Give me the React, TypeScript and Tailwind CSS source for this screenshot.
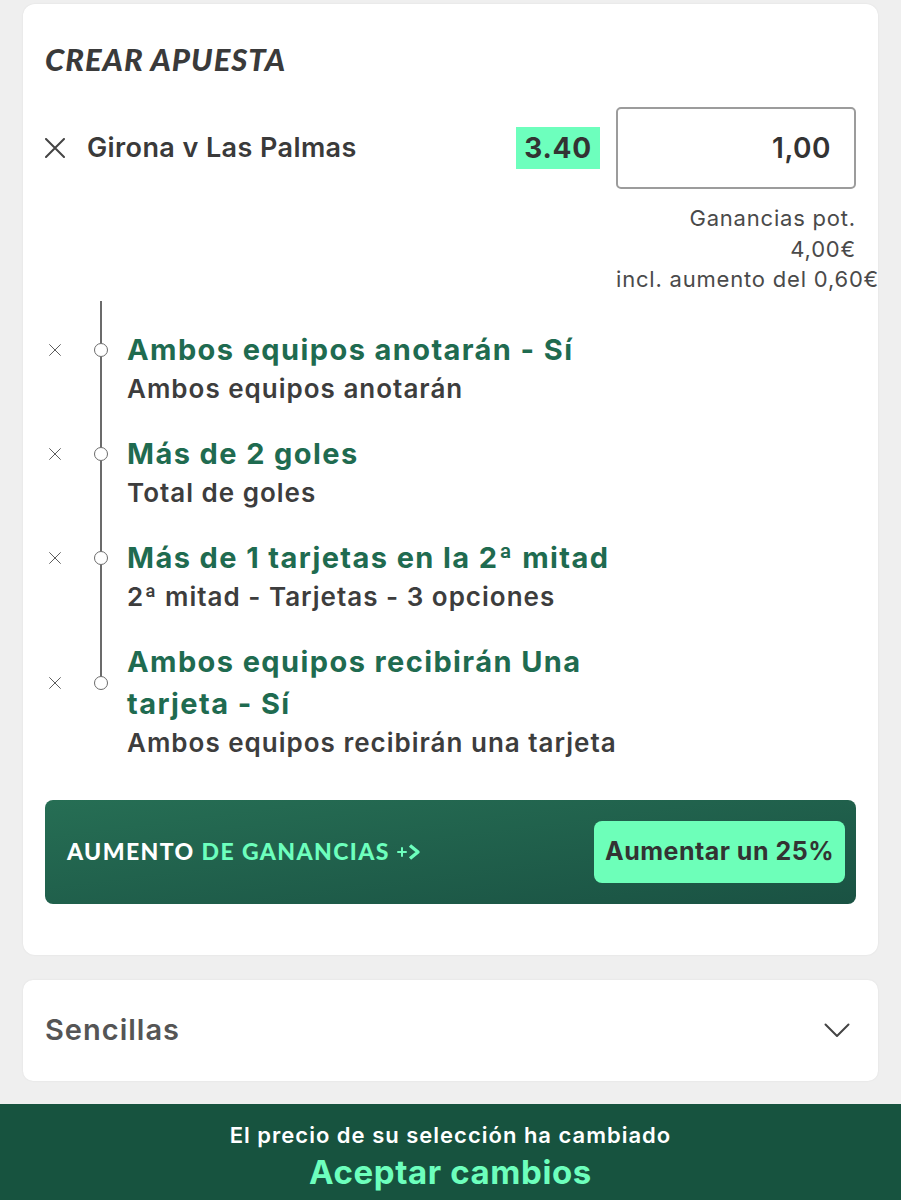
import React from "react";

type Leg = { title: string[]; market: string };

const LEGS: Leg[] = [
  { title: ["Ambos equipos anotarán - Sí"], market: "Ambos equipos anotarán" },
  { title: ["Más de 2 goles"], market: "Total de goles" },
  {
    title: ["Más de 1 tarjetas en la 2ª mitad"],
    market: "2ª mitad - Tarjetas - 3 opciones",
  },
  {
    title: ["Ambos equipos recibirán Una", "tarjeta - Sí"],
    market: "Ambos equipos recibirán una tarjeta",
  },
];

const sans = { fontFamily: "Inter, 'Noto Sans', sans-serif" };
const geo = { fontFamily: "Lato, 'Liberation Sans', sans-serif" };

function Cross({ size, stroke }: { size: number; stroke: number }) {
  return (
    <svg width={size} height={size} viewBox="0 0 20 20" fill="none">
      <path
        d="M1 1L19 19M19 1L1 19"
        stroke="currentColor"
        strokeWidth={stroke}
        strokeLinecap="round"
      />
    </svg>
  );
}

function LegRow({ leg, first, last }: { leg: Leg; first: boolean; last: boolean }) {
  return (
    <div className="flex flex-col">
      {/* spacer with the rail running through */}
      <div className={`flex ${first ? "h-[28px]" : "h-[26px]"}`}>
        <div className="w-[20px]" />
        <div className="ml-[24px] flex w-[24px] justify-center">
          <div className="w-[2px] bg-[#6b6b6b]" />
        </div>
      </div>

      <div className="flex">
        <div className="flex w-[20px] items-center justify-center text-[#555]">
          <Cross size={12} stroke={1.6} />
        </div>
        <div className="ml-[24px] flex w-[24px] flex-col items-center">
          <div className="w-[2px] flex-1 bg-[#6b6b6b]" />
          <div className="h-[14px] w-[14px] shrink-0 rounded-full border-[1.5px] border-[#6b6b6b] bg-white" />
          <div className={`w-[2px] flex-1 ${last ? "" : "bg-[#6b6b6b]"}`} />
        </div>
        <div className="ml-[14px] text-[29px] font-bold leading-[42px] tracking-[1.4px] text-[#1f6b50]">
          {leg.title.map((t) => (
            <div key={t}>{t}</div>
          ))}
        </div>
      </div>

      <div className="flex">
        <div className="w-[20px]" />
        <div className="ml-[24px] flex w-[24px] justify-center">
          {!last && <div className="w-[2px] bg-[#6b6b6b]" />}
        </div>
        <div className="ml-[14px] text-[26px] font-semibold leading-[36px] tracking-[1px] text-[#3d3d3d]">
          {leg.market}
        </div>
      </div>
    </div>
  );
}

export default function App() {
  return (
    <div className="min-h-[1200px] bg-[#efefef] pt-[4px]" style={sans}>
      <div className="mx-[23px] rounded-[12px] bg-white px-[22px] pt-[33px] pb-[51px] shadow-[0_0_2px_rgba(0,0,0,0.08)]">
        <h1
          className="text-[31px] font-black italic leading-[44px] tracking-[1px] text-[#3a3a3a]"
          style={geo}
        >
          CREAR APUESTA
        </h1>

        <div className="mt-[26px] flex h-[82px] items-center">
          <div className="flex w-[20px] justify-center text-[#444]">
            <Cross size={20} stroke={2} />
          </div>
          <div className="ml-[22px] flex-1 text-[27px] font-semibold tracking-[0.4px] text-[#3a3a3a]">
            Girona v Las Palmas
          </div>
          <div className="flex h-[42px] items-center bg-[#6dffbd] px-[8px] text-[28px] font-bold tracking-[0.8px] text-[#333]">
            3.40
          </div>
          <div className="ml-[16px] flex h-[82px] w-[240px] items-center justify-end rounded-[5px] border-2 border-[#9c9c9c] pr-[23px] text-[28px] font-semibold tracking-[0.5px] text-[#333]">
            1,00
          </div>
        </div>

        <div className="flex justify-end">
          <div className="mt-[14px] w-[240px] text-right text-[22px] leading-[30.5px] tracking-[0.8px] text-[#4a4a4a]">
            <div>Ganancias pot.</div>
            <div>4,00€</div>
            <div className="whitespace-nowrap">incl. aumento del 0,60€</div>
          </div>
        </div>

        <div className="mt-[6px]">
          {LEGS.map((leg, i) => (
            <LegRow key={i} leg={leg} first={i === 0} last={i === LEGS.length - 1} />
          ))}
        </div>

        <div className="mt-[39px] flex h-[104px] items-center justify-between rounded-[8px] bg-gradient-to-br from-[#266e54] to-[#1a5243] pl-[22px] pr-[11px]">
          <div className="flex items-center text-[23px] font-black tracking-[1.4px]" style={geo}>
            <span className="text-white">AUMENTO</span>
            <span className="ml-[7px] text-[#6dffbd]">DE GANANCIAS</span>
            <svg className="ml-[6px]" width="28" height="20" viewBox="0 0 28 20" fill="none">
              <path d="M2 10H10M6 6V14" stroke="#6dffbd" strokeWidth="2" strokeLinecap="round" />
              <path d="M14 3.5L22 10L14 16.5" stroke="#6dffbd" strokeWidth="3.4" strokeLinejoin="round" />
            </svg>
          </div>
          <button className="flex h-[62px] w-[251px] items-center justify-center rounded-[8px] bg-[#6dffb9] text-[25px] font-bold tracking-[0.5px] text-[#333]">
            Aumentar un 25%
          </button>
        </div>
      </div>

      <div className="mx-[23px] mt-[25px] flex h-[101px] items-center justify-between rounded-[10px] bg-white pl-[22px] pr-[28px] shadow-[0_0_2px_rgba(0,0,0,0.08)]">
        <span className="text-[29px] font-semibold tracking-[1px] text-[#555]">Sencillas</span>
        <svg width="26" height="15" viewBox="0 0 26 15" fill="none">
          <path d="M1.5 1.5L13 13L24.5 1.5" stroke="#444" strokeWidth="2" strokeLinecap="round" strokeLinejoin="round" />
        </svg>
      </div>

      <div className="mt-[23px] flex h-[97px] flex-col items-center bg-[#17533f] pt-[16px]">
        <div className="text-[22px] font-semibold leading-[30px] tracking-[1px] text-white">
          El precio de su selección ha cambiado
        </div>
        <div className="text-[33px] font-bold leading-[44px] tracking-[0.6px] text-[#6dffbd]">
          Aceptar cambios
        </div>
      </div>
    </div>
  );
}
